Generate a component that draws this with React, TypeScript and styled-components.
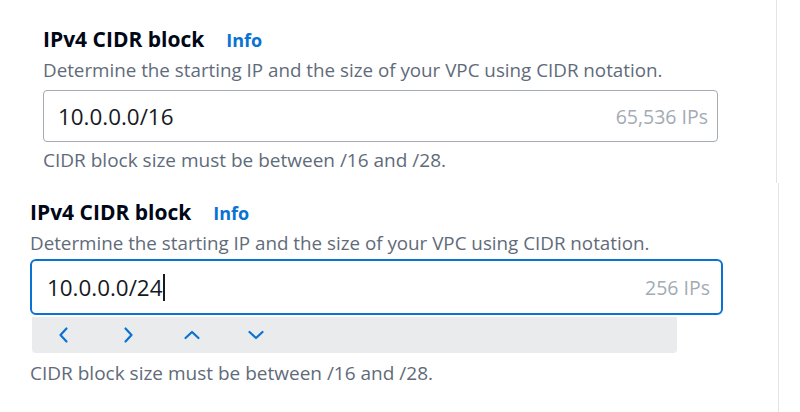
import React from "react";
import styled, { createGlobalStyle } from "styled-components";

const Global = createGlobalStyle`
  html, body { margin: 0; padding: 0; background: #ffffff; }
  body { font-family: "Open Sans", "Noto Sans", sans-serif; width: 800px; height: 412px; overflow: hidden; }
`;

const Page = styled.div`
  display: flex;
  flex-direction: column;
  width: 800px;
  height: 412px;
  background: #ffffff;
`;

const Panel = styled.section<{ $height: number; $divider: number; $padTop: number; $padLeft: number }>`
  box-sizing: border-box;
  height: ${(p) => p.$height}px;
  width: ${(p) => p.$divider + 1}px;
  border-right: 1px solid #e3e4e6;
  padding: ${(p) => p.$padTop}px 0 0 ${(p) => p.$padLeft}px;
  display: flex;
  flex-direction: column;
`;

const LabelRow = styled.div`
  display: flex;
  align-items: baseline;
  gap: 22px;
  line-height: 24px;
  white-space: nowrap;
`;

const Title = styled.span`
  font-size: 21px;
  font-weight: 700;
  color: #000716;
`;

const InfoLink = styled.a`
  font-size: 18px;
  font-weight: 700;
  color: #0972d3;
  text-decoration: none;
`;

const Description = styled.div<{ $gap: number }>`
  margin-top: ${(p) => p.$gap}px;
  font-size: 18.8px;
  line-height: 24px;
  color: #5f6b7a;
  white-space: nowrap;
`;

const InputBox = styled.div<{ $width: number; $height: number; $focused?: boolean; $gap: number }>`
  box-sizing: border-box;
  margin-top: ${(p) => p.$gap}px;
  width: ${(p) => p.$width}px;
  height: ${(p) => p.$height}px;
  border: ${(p) => (p.$focused ? "2px solid #0972d3" : "1px solid #a4abb3")};
  border-radius: ${(p) => (p.$focused ? 6 : 4)}px;
  display: flex;
  align-items: center;
  justify-content: space-between;
  padding: 0 ${(p) => (p.$focused ? 11 : 9)}px 0 ${(p) => (p.$focused ? 15 : 14)}px;
`;

const Value = styled.span`
  display: flex;
  align-items: center;
  font-size: 22.4px;
  color: #16191f;
`;

const Caret = styled.span`
  display: inline-block;
  width: 1.5px;
  height: 27px;
  margin-left: 1px;
  background: #16191f;
`;

const Count = styled.span`
  font-size: 19.5px;
  color: #a4abb3;
`;

const Toolbar = styled.div<{ $width: number }>`
  box-sizing: border-box;
  margin-top: 2px;
  margin-left: 2px;
  width: ${(p) => p.$width}px;
  height: 36px;
  background: #e9ebed;
  border-radius: 0 0 4px 4px;
  display: flex;
  align-items: center;
`;

const ToolButton = styled.button`
  width: 64px;
  height: 36px;
  border: none;
  background: transparent;
  padding: 0;
  display: flex;
  align-items: center;
  justify-content: center;
  color: #0972d3;
`;

const Helper = styled.div<{ $gap: number }>`
  margin-top: ${(p) => p.$gap}px;
  font-size: 19px;
  line-height: 24px;
  color: #5f6b7a;
  white-space: nowrap;
`;

type Dir = "left" | "right" | "up" | "down";
const chevronPath: Record<Dir, string> = {
  left: "M11.5 2.5 L5.5 9 L11.5 15.5",
  right: "M6.5 2.5 L12.5 9 L6.5 15.5",
  up: "M2.5 12 L9 6 L15.5 12",
  down: "M2.5 6 L9 12 L15.5 6",
};

const Chevron = ({ dir }: { dir: Dir }) => (
  <svg width="18" height="18" viewBox="0 0 18 18" fill="none">
    <path d={chevronPath[dir]} stroke="currentColor" strokeWidth="2.2" strokeLinecap="round" strokeLinejoin="round" />
  </svg>
);

export default function App() {
  return (
    <Page>
      <Global />
      <Panel $height={183} $divider={776} $padTop={27} $padLeft={43}>
        <LabelRow>
          <Title>IPv4 CIDR block</Title>
          <InfoLink href="#">Info</InfoLink>
        </LabelRow>
        <Description $gap={6}>Determine the starting IP and the size of your VPC using CIDR notation.</Description>
        <InputBox $width={675} $height={52} $gap={8}>
          <Value>10.0.0.0/16</Value>
          <Count>65,536 IPs</Count>
        </InputBox>
        <Helper $gap={6}>CIDR block size must be between /16 and /28.</Helper>
      </Panel>
      <Panel $height={229} $divider={778} $padTop={17} $padLeft={30}>
        <LabelRow>
          <Title>IPv4 CIDR block</Title>
          <InfoLink href="#">Info</InfoLink>
        </LabelRow>
        <Description $gap={6}>Determine the starting IP and the size of your VPC using CIDR notation.</Description>
        <InputBox $width={693} $height={56} $focused $gap={4}>
          <Value>
            10.0.0.0/24
            <Caret />
          </Value>
          <Count>256 IPs</Count>
        </InputBox>
        <Toolbar $width={645}>
          <ToolButton aria-label="Previous"><Chevron dir="left" /></ToolButton>
          <ToolButton aria-label="Next"><Chevron dir="right" /></ToolButton>
          <ToolButton aria-label="Up"><Chevron dir="up" /></ToolButton>
          <ToolButton aria-label="Down"><Chevron dir="down" /></ToolButton>
        </Toolbar>
        <Helper $gap={8}>CIDR block size must be between /16 and /28.</Helper>
      </Panel>
    </Page>
  );
}
